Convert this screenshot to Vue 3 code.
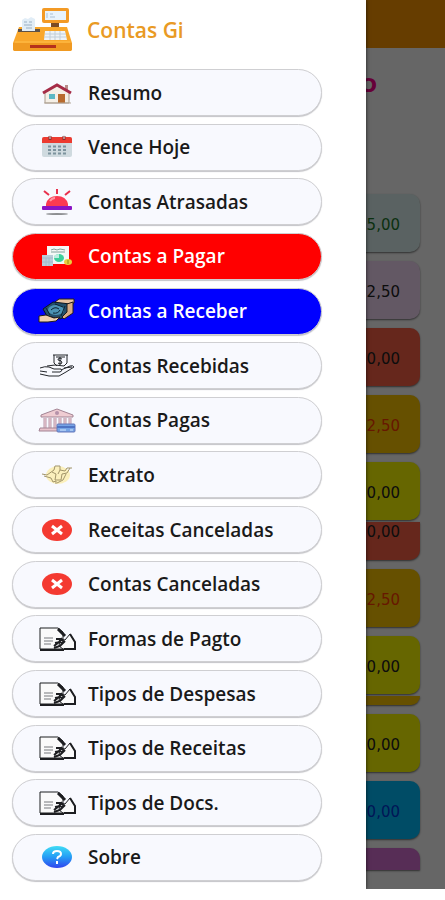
<template>
  <main class="screen">
    <div class="page">
      <header class="topbar"></header>
      <h2 class="title">O</h2>
      <div class="cards">
        <div
          v-for="card in cards"
          :key="card.id"
          class="card"
          :class="[card.color, card.shape]"
        >
          {{ card.value }}
        </div>
      </div>
    </div>
    <div class="overlay"></div>
    <aside class="drawer">
      <div class="brand">
        <svg class="logo" width="62" height="44" viewBox="0 0 62 44">
          <path d="M7 19h48l5 16v6q0 2-3 2H4q-3 0-3-2v-6z" fill="#f9a72b" />
          <path d="M1 35h59v6q0 2-3 2H4q-3 0-3-2z" fill="#f09a22" />
          <path d="M3 34h55" stroke="#ffbf4d" />
          <rect x="18" y="37" width="26" height="3" fill="#b5301b" />
          <rect x="39" y="14" width="8" height="5" fill="#7a4b25" />
          <rect x="30" y="0" width="27" height="15" rx="2" fill="#f39a25" />
          <rect x="33" y="3" width="21" height="9" fill="#e8f3fc" />
          <path d="M35 5v5M38 6h3M38 9h5" stroke="#a9c0d6" />
          <rect x="6" y="21" width="22" height="3" fill="#5d5148" />
          <path d="M10 12l3-2 3 1 3-2 4 2v12H10z" fill="#e1edf7" />
          <path d="M12 14h3M17 14h3M12 17h8M14 20h6" stroke="#9aafc3" />
          <path d="M33 23h20l2 9H32z" fill="#eef3f7" />
          <path d="M33 26h21M32 29h22M38 23v9M43 23v9M48 23v9" stroke="#c1ced9" />
        </svg>
        <h1>Contas Gi</h1>
      </div>
      <nav class="menu">
        <button
          v-for="item in items"
          :key="item.label"
          type="button"
          class="item"
          :class="item.theme"
        >
          <svg class="icon" width="38" height="26" viewBox="0 0 38 26">
            <g v-if="item.icon === 'house'">
              <path d="M7 12l12-7 12 7v11H7z" fill="#f5efe6" stroke="#a99a8d" />
              <rect x="27" y="5" width="3" height="6" fill="#b98d8a" />
              <path d="M5 13L19 5l14 8" fill="none" stroke="#a52c47" stroke-width="3" />
              <rect x="11" y="14" width="6" height="5" fill="#5cb8c4" />
              <rect x="20" y="14" width="7" height="9" fill="#b86b2f" />
              <path d="M6 23h27" stroke="#b3a899" />
            </g>
            <g v-else-if="item.icon === 'calendar'">
              <rect x="4" y="3" width="30" height="20" rx="2" fill="#cfdadf" />
              <path d="M4 9V5q0-2 2-2h26q2 0 2 2v4z" fill="#ec3b30" />
              <path d="M12 2v4M26 2v4" stroke="#8f2f2b" stroke-width="3" />
              <path d="M12 1v4M26 1v4" stroke="#d9e1e5" stroke-width="1" />
              <path
                d="M10 12.500h18M10 16h18M10 19.500h18"
                stroke="#7d939e"
                stroke-width="2"
                stroke-dasharray="3 2"
              />
            </g>
            <g v-else-if="item.icon === 'siren'">
              <path d="M6 2l5 4M19 0v5M32 2l-5 4" stroke="#e8304c" stroke-width="2" />
              <path d="M8 17v-2q2-8 11-8t11 8v2z" fill="#fb3a52" />
              <path d="M12 12q2-3 5-3" stroke="#ff97a2" stroke-width="2" fill="none" />
              <rect x="4" y="17" width="30" height="4" rx="1" fill="#8a14c4" />
              <ellipse cx="19" cy="25" rx="11" ry="1" fill="#8d8f92" />
            </g>
            <g v-else-if="item.icon === 'report'">
              <rect x="9" y="3" width="22" height="18" fill="#f4f8f6" />
              <path d="M13 7l3-1 3 1 3-1 5 1M13 9h14" stroke="#84a29c" fill="none" />
              <ellipse cx="21" cy="15" rx="5" ry="4" fill="#3ccf9b" />
              <path d="M21 15v-4q-5 0-5 4z" fill="#bceee0" />
              <rect x="4" y="12" width="11" height="11" fill="#b8cdd9" />
              <path d="M4 15h11M4 19h11M8 15v8M11 15v8" stroke="#a3bcca" />
              <ellipse cx="30" cy="19" rx="4" ry="3" fill="#e9cf3d" />
              <path d="M30 17v4" stroke="#9b8512" />
            </g>
            <g v-else-if="item.icon === 'cash'">
              <path d="M17 4l4-3h15v4l-6 3-10 2z" fill="#e9c3a1" stroke="#241c1a" />
              <path d="M5 11l10-7 17 2-1 11-9 4-13-3z" fill="#25506b" stroke="#0b1520" />
              <ellipse cx="18" cy="12" rx="8" ry="5" fill="#4b93b4" />
              <path
                d="M13 12q4-4 8-1M15 15q5 1 7-3M8 10l4 7M27 8l-4 10M17 6l8 3"
                fill="none"
                stroke="#0d2230"
              />
              <path d="M29 6l6-2v11l-9 6-2-2 5-5z" fill="#d9ac85" stroke="#241c1a" />
              <path d="M1 18l7-1 8 3 6-1-4 4-8 1H1z" fill="#efcfae" stroke="#241c1a" />
            </g>
            <g v-else-if="item.icon === 'hand'" fill="none" stroke="#23262b">
              <path d="M15 2h15M16 2v8l3 3M29 2v8l-3 3M18 4h9" />
              <path d="M24 6q-4-2-4 1 4 0 4 3-2 2-4 0M22 4v8" />
              <path d="M2 15q5-2 9-1l5 2h7q2 2-1 3h-8" />
              <path d="M23 17l9-4q3-1 4 1l-8 5-7 4H11l-9-2" />
              <path d="M2 18l7 1M26 15l8-1M9 13l8-1 9 1" />
            </g>
            <g v-else-if="item.icon === 'bank'">
              <path d="M3 8l16-6 16 6v2H3z" fill="#efccd2" stroke="#a38494" />
              <path d="M7 11v10M12 11v10M17 11v10M22 11v10M27 11v10M32 11v6" stroke="#b895a8" stroke-width="3" />
              <path d="M7 11v10M12 11v10M17 11v10M22 11v10M27 11v10M32 11v6" stroke="#f3d5da" />
              <path d="M2 21h20v3H1z" fill="#e8c2cb" stroke="#a38494" />
              <circle cx="19" cy="6" r="2" fill="#b592a9" />
              <rect x="19" y="17" width="18" height="8" rx="1" fill="#76a4e6" stroke="#6477b9" />
              <path d="M19 20h18" stroke="#4f74c4" stroke-width="2" />
              <path d="M22 23h6M32 23h3" stroke="#d7e8fd" />
            </g>
            <g v-else-if="item.icon === 'exchange'">
              <ellipse cx="20" cy="13" rx="12" ry="9" fill="#fbf0bd" />
              <path
                d="M4 12l5 1 7-5 1-4h5v4l5 1 2-3h5M6 14l7 2 2 4 3-1v3M14 10l4 2-1 6h6l1-6 5-1 3-5M22 8l-2 4M28 12l-3 6-6 3"
                fill="none"
                stroke="#a2956a"
              />
            </g>
            <g v-else-if="item.icon === 'cancel'">
              <ellipse cx="19" cy="13" rx="15" ry="11" fill="#f43a31" />
              <path d="M14 9l10 8M24 9l-10 8" stroke="#fff" stroke-width="3" />
            </g>
            <g v-else-if="item.icon === 'sign'" fill="none" stroke="#1d1e21">
              <path d="M2 2h18l5 4v17H2z" fill="#fafafa" />
              <path d="M2 24h24" stroke-width="2" />
              <path d="M6 12h9M6 15h9M6 18h7" stroke="#77797d" />
              <path d="M20 3l7 7" stroke-width="3" />
              <path d="M22 13l5 1 5-6 5 8v7H25l-4-3z" fill="#fafafa" />
              <path d="M32 8l5 8v7H26" stroke-width="2" />
              <path d="M18 13h5l3 3M17 17l5-1 3 2M16 20l5-4 3-4M16 22l6-2 5-5" stroke-width="2" />
            </g>
            <g v-else>
              <ellipse cx="19" cy="13" rx="15" ry="11" fill="url(#about)" />
              <path
                d="M15 10q0-3 4-3t4 3q0 2-3 3l-1 2M19 17v3"
                fill="none"
                stroke="#fff"
                stroke-width="2"
              />
              <defs>
                <linearGradient id="about" x1="0" y1="0" x2="0" y2="1">
                  <stop offset="0" stop-color="#3fdcf5" />
                  <stop offset="0.500" stop-color="#259df5" />
                  <stop offset="1" stop-color="#3044ee" />
                </linearGradient>
              </defs>
            </g>
          </svg>
          <span>{{ item.label }}</span>
        </button>
      </nav>
    </aside>
  </main>
</template>

<script setup>
import { ref } from 'vue';

const items = ref([
  { label: 'Resumo', icon: 'house' },
  { label: 'Vence Hoje', icon: 'calendar' },
  { label: 'Contas Atrasadas', icon: 'siren' },
  { label: 'Contas a Pagar', icon: 'report', theme: 'pay' },
  { label: 'Contas a Receber', icon: 'cash', theme: 'receive' },
  { label: 'Contas Recebidas', icon: 'hand' },
  { label: 'Contas Pagas', icon: 'bank' },
  { label: 'Extrato', icon: 'exchange' },
  { label: 'Receitas Canceladas', icon: 'cancel' },
  { label: 'Contas Canceladas', icon: 'cancel' },
  { label: 'Formas de Pagto', icon: 'sign' },
  { label: 'Tipos de Despesas', icon: 'sign' },
  { label: 'Tipos de Receitas', icon: 'sign' },
  { label: 'Tipos de Docs.', icon: 'sign' },
  { label: 'Sobre', icon: 'about' },
]);

const cards = ref([
  { id: 1, value: '5,00', color: 'mint' },
  { id: 2, value: '2,50', color: 'lilac' },
  { id: 3, value: '0,00', color: 'tomato' },
  { id: 4, value: '2,50', color: 'gold' },
  { id: 5, value: '0,00', color: 'yellow' },
  { id: 6, value: '0,00', color: 'tomato', shape: 'cut' },
  { id: 7, value: '2,50', color: 'gold' },
  { id: 8, value: '0,00', color: 'yellow' },
  { id: 9, value: '', color: 'gold', shape: 'strip' },
  { id: 10, value: '0,00', color: 'yellow' },
  { id: 11, value: '0,00', color: 'sky' },
  { id: 12, value: '', color: 'purple', shape: 'last' },
]);
</script>

<style>
body {
  background-color: white;
}
</style>

<style scoped>
.screen {
  position: relative;
  height: calc(100vh - 11px);
  min-height: 780px;
  overflow: hidden;
  box-shadow: 0 1px 1px #eeeeee;
  font-family: 'Open Sans', 'Noto Sans', sans-serif;
}
.page {
  background-color: white;
  height: 100%;
  font-family: 'DejaVu Sans', sans-serif;
}
.topbar {
  height: 48px;
  background-color: #ff9800;
}
.title {
  margin: 0;
  padding: 20px 68px 0 0;
  height: 126px;
  box-sizing: border-box;
  text-align: right;
  font-size: 20px;
  line-height: 34px;
  color: #ff0090;
}
.cards {
  display: flex;
  flex-direction: column;
  gap: 9px;
  padding: 20px 25px 0;
}
.card {
  box-sizing: border-box;
  height: 58px;
  padding-right: 20px;
  border-radius: 10px;
  box-shadow: 0 1px 2px #777777;
  text-align: right;
  font-size: 15px;
  line-height: 62px;
  color: #222222;
}
.mint {
  background-color: #e2f6f4;
  color: #1c7a2c;
}
.lilac {
  background-color: #f8dcfa;
}
.tomato {
  background-color: #ff6347;
}
.gold {
  background-color: #ffc800;
  color: #ff3c00;
}
.yellow {
  background-color: #ffff00;
}
.sky {
  background-color: #00bfff;
  color: #0038d8;
}
.purple {
  background-color: #da70d6;
}
.cut {
  height: 38px;
  margin-top: -7px;
  border-radius: 0 0 10px 10px;
  line-height: 20px;
}
.strip {
  height: 9px;
  margin-top: -7px;
  border-radius: 0 0 10px 10px;
}
.last {
  height: 22px;
  border-radius: 10px 10px 0 0;
}
.overlay {
  position: absolute;
  inset: 0;
  background-color: rgba(0, 0, 0, 0.6);
}
.drawer {
  position: absolute;
  top: 0;
  bottom: 0;
  left: 0;
  box-sizing: border-box;
  width: calc(100% - 79px);
  padding: 8px 44px 8px 12px;
  display: flex;
  flex-direction: column;
  gap: 17px;
  background-color: white;
  box-shadow: 0 0 4px rgba(0, 0, 0, 0.7);
}
.brand {
  display: flex;
  align-items: center;
  gap: 13px;
}
h1 {
  margin: 0;
  font-size: 21px;
  font-weight: 600;
  line-height: 24px;
  color: #e99a24;
}
.menu {
  flex: 1;
  display: flex;
  flex-direction: column;
  justify-content: space-between;
}
.item {
  box-sizing: border-box;
  width: 100%;
  height: 47px;
  padding: 0 25px;
  display: flex;
  align-items: center;
  gap: 12px;
  border: 1px solid #cfcfd2;
  border-radius: 24px;
  background-color: #f8f9fe;
  box-shadow: 0 1px 1px #c4c4c8;
  color: #1a1a1a;
  font-family: inherit;
  font-size: 19px;
  font-weight: 600;
  line-height: 24px;
  cursor: pointer;
}
.pay {
  background-color: #ff0000;
  color: white;
}
.receive {
  background-color: #0000ff;
  color: white;
}
</style>
